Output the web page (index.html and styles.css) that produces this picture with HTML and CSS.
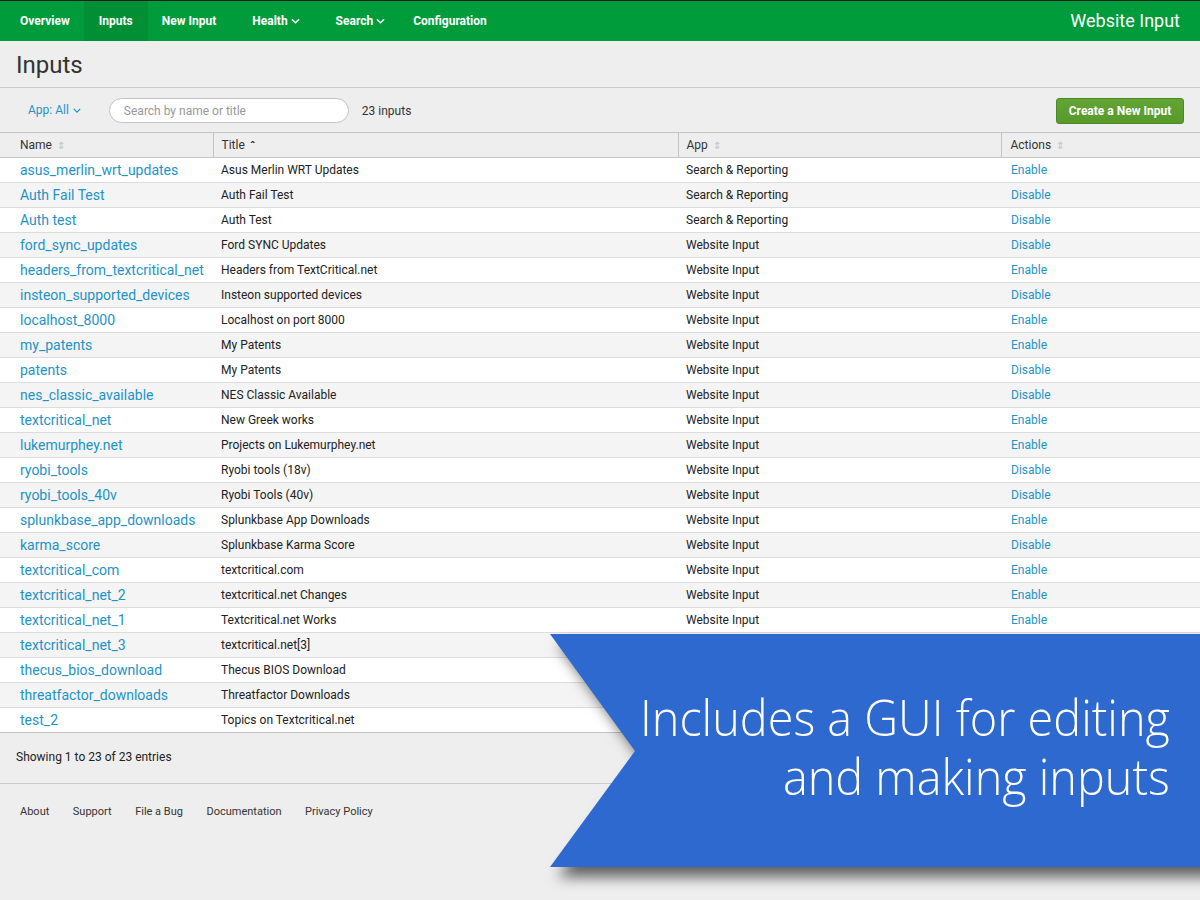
FILE: index.html
```html
<!DOCTYPE html>
<html>
<head>
<meta charset="utf-8">
<link rel="stylesheet" href="styles.css">
</head>
<body>
<nav class="nav">
  <ul class="nav-items">
    <li class="nav-item">Overview</li>
    <li class="nav-item active">Inputs</li>
    <li class="nav-item">New Input</li>
    <li class="nav-item drop">Health <svg class="chev" viewBox="0 0 10 6"><path d="M1 1l4 4 4-4" /></svg></li>
    <li class="nav-item drop">Search <svg class="chev" viewBox="0 0 10 6"><path d="M1 1l4 4 4-4" /></svg></li>
    <li class="nav-item">Configuration</li>
  </ul>
  <div class="app-name">Website Input</div>
</nav>

<header class="page-header">
  <h1 class="page-title">Inputs</h1>
</header>

<div class="toolbar">
  <div class="app-filter">App: All <svg class="chev" viewBox="0 0 10 6"><path d="M1 1l4 4 4-4" /></svg></div>
  <div class="search-box">Search by name or title</div>
  <div class="count">23 inputs</div>
  <div class="spacer"></div>
  <button class="btn-create">Create a New Input</button>
</div>

<table class="inputs-table">
  <thead>
    <tr>
      <th class="col-name">Name <span class="sort">&#8661;</span></th>
      <th class="col-title">Title <span class="sort-active">&#710;</span></th>
      <th class="col-app">App <span class="sort">&#8661;</span></th>
      <th class="col-actions">Actions <span class="sort">&#8661;</span></th>
    </tr>
  </thead>
  <tbody>
    <tr><td><a>asus_merlin_wrt_updates</a></td><td>Asus Merlin WRT Updates</td><td>Search &amp; Reporting</td><td><a class="act">Enable</a></td></tr>
    <tr><td><a>Auth Fail Test</a></td><td>Auth Fail Test</td><td>Search &amp; Reporting</td><td><a class="act">Disable</a></td></tr>
    <tr><td><a>Auth test</a></td><td>Auth Test</td><td>Search &amp; Reporting</td><td><a class="act">Disable</a></td></tr>
    <tr><td><a>ford_sync_updates</a></td><td>Ford SYNC Updates</td><td>Website Input</td><td><a class="act">Disable</a></td></tr>
    <tr><td><a>headers_from_textcritical_net</a></td><td>Headers from TextCritical.net</td><td>Website Input</td><td><a class="act">Enable</a></td></tr>
    <tr><td><a>insteon_supported_devices</a></td><td>Insteon supported devices</td><td>Website Input</td><td><a class="act">Disable</a></td></tr>
    <tr><td><a>localhost_8000</a></td><td>Localhost on port 8000</td><td>Website Input</td><td><a class="act">Enable</a></td></tr>
    <tr><td><a>my_patents</a></td><td>My Patents</td><td>Website Input</td><td><a class="act">Enable</a></td></tr>
    <tr><td><a>patents</a></td><td>My Patents</td><td>Website Input</td><td><a class="act">Disable</a></td></tr>
    <tr><td><a>nes_classic_available</a></td><td>NES Classic Available</td><td>Website Input</td><td><a class="act">Disable</a></td></tr>
    <tr><td><a>textcritical_net</a></td><td>New Greek works</td><td>Website Input</td><td><a class="act">Enable</a></td></tr>
    <tr><td><a>lukemurphey.net</a></td><td>Projects on Lukemurphey.net</td><td>Website Input</td><td><a class="act">Enable</a></td></tr>
    <tr><td><a>ryobi_tools</a></td><td>Ryobi tools (18v)</td><td>Website Input</td><td><a class="act">Disable</a></td></tr>
    <tr><td><a>ryobi_tools_40v</a></td><td>Ryobi Tools (40v)</td><td>Website Input</td><td><a class="act">Disable</a></td></tr>
    <tr><td><a>splunkbase_app_downloads</a></td><td>Splunkbase App Downloads</td><td>Website Input</td><td><a class="act">Enable</a></td></tr>
    <tr><td><a>karma_score</a></td><td>Splunkbase Karma Score</td><td>Website Input</td><td><a class="act">Disable</a></td></tr>
    <tr><td><a>textcritical_com</a></td><td>textcritical.com</td><td>Website Input</td><td><a class="act">Enable</a></td></tr>
    <tr><td><a>textcritical_net_2</a></td><td>textcritical.net Changes</td><td>Website Input</td><td><a class="act">Enable</a></td></tr>
    <tr><td><a>textcritical_net_1</a></td><td>Textcritical.net Works</td><td>Website Input</td><td><a class="act">Enable</a></td></tr>
    <tr><td><a>textcritical_net_3</a></td><td>textcritical.net[3]</td><td></td><td></td></tr>
    <tr><td><a>thecus_bios_download</a></td><td>Thecus BIOS Download</td><td></td><td></td></tr>
    <tr><td><a>threatfactor_downloads</a></td><td>Threatfactor Downloads</td><td></td><td></td></tr>
    <tr><td><a>test_2</a></td><td>Topics on Textcritical.net</td><td></td><td></td></tr>
  </tbody>
</table>

<div class="showing">Showing 1 to 23 of 23 entries</div>

<footer class="footer">
  <a>About</a>
  <a>Support</a>
  <a>File a Bug</a>
  <a>Documentation</a>
  <a>Privacy Policy</a>
</footer>

<div class="banner-wrap">
  <div class="banner">
    <div class="banner-text">Includes a GUI for editing<br>and making inputs</div>
  </div>
</div>
</body>
</html>
```

FILE: styles.css
```css
* { box-sizing: border-box; }
html, body { margin: 0; padding: 0; }
body {
  background: #eeeeee;
  font-family: Roboto, "Liberation Sans", sans-serif;
  color: #333;
  width: 1200px;
  height: 900px;
  overflow: hidden;
  position: relative;
}

.nav {
  height: 41px;
  background: #009b3a;
  border-top: 1px solid #1d1d1d;
  display: flex;
  align-items: stretch;
  padding-left: 6px;
  padding-right: 20px;
}
.nav-items {
  list-style: none;
  margin: 0;
  padding: 0;
  display: flex;
  flex: 1;
}
.nav-item {
  display: flex;
  align-items: center;
  gap: 3px;
  padding: 0 14px 1px 14px;
  color: #fff;
  font-size: 12px;
  font-weight: 700;
}
.nav-item.active { padding: 0 15px 1px 15px; background: #008f35; }
.nav-item.drop { padding: 0 14px 1px 22px; }
.nav-item .chev {
  width: 9px;
  height: 6px;
  fill: none;
  stroke: #fff;
  stroke-width: 1.6;
}
.app-name {
  color: #fff;
  font-size: 18px;
  display: flex;
  align-items: center;
  padding-bottom: 2px;
}

.page-header {
  height: 47px;
  border-bottom: 1px solid #cccccc;
  padding: 10px 16px 0;
}
.page-title {
  margin: 0;
  font-size: 24px;
  font-weight: 400;
  color: #333;
  line-height: 28px;
}

.toolbar {
  height: 44px;
  display: flex;
  align-items: center;
  padding: 0 16px 0 28px;
}
.app-filter {
  color: #1e93c6;
  font-size: 12px;
  display: flex;
  align-items: center;
  gap: 4px;
  margin-right: 28px;
}
.app-filter .chev {
  width: 8px;
  height: 5px;
  fill: none;
  stroke: #1e93c6;
  stroke-width: 1.6;
}
.search-box {
  width: 240px;
  height: 25px;
  background: #fff;
  border: 1px solid #c3c3c3;
  border-radius: 13px;
  font-size: 12px;
  color: #999;
  padding: 5px 14px;
  margin-right: 13px;
}
.count { font-size: 12px; color: #333; padding-top: 1px; }
.spacer { flex: 1; }
.btn-create {
  font-family: Roboto, "Liberation Sans", sans-serif;
  height: 26px;
  width: 128px;
  background: linear-gradient(#62a535, #579a2b);
  border: 1px solid #4a8a22;
  border-radius: 3px;
  color: #fff;
  font-size: 12px;
  font-weight: 700;
  padding: 0;
  margin-top: 2px;
}

.inputs-table {
  width: 1200px;
  border-collapse: collapse;
  table-layout: fixed;
}
.inputs-table th {
  height: 25px;
  text-align: left;
  font-size: 12px;
  font-weight: 400;
  color: #333;
  border-top: 1px solid #c3c3c3;
  border-bottom: 1px solid #c3c3c3;
  border-left: 1px solid #c3c3c3;
  padding: 0 8px;
  background: #eeeeee;
}
.inputs-table th:first-child { border-left: none; padding-left: 20px; }
.col-name { width: 213px; }
.col-title { width: 465px; }
.col-app { width: 323px; }
.col-actions { width: 199px; }
.inputs-table th.col-actions { padding-left: 9px; }
.sort { color: #c0c0c0; font-size: 10px; margin-left: 2px; }
.sort-active { color: #222; font-size: 12px; font-weight: 700; margin-left: 2px; position: relative; top: 2px; }

.inputs-table td {
  height: 25px;
  font-size: 12px;
  color: #222;
  border-bottom: 1px solid #dcdcdc;
  padding: 0 8px;
  white-space: nowrap;
  overflow: hidden;
}
.inputs-table td:first-child { padding-left: 20px; }
.inputs-table td:last-child { padding-left: 10px; }
.inputs-table tbody tr:nth-child(odd) td { background: #ffffff; }
.inputs-table tbody tr:nth-child(even) td { background: #f4f4f4; }
.inputs-table tbody tr:last-child td { border-bottom: 1px solid #c3c3c3; }
.inputs-table td a { color: #1e93c6; font-size: 14px; }
.inputs-table td a.act { font-size: 12px; }

.showing {
  height: 51px;
  border-bottom: 1px solid #cccccc;
  font-size: 12px;
  padding: 17px 16px 0;
  color: #222;
}

.footer {
  display: flex;
  gap: 23.5px;
  padding: 21px 20px 0;
  font-size: 11px;
}
.footer a { color: #333; }

.banner-wrap {
  position: absolute;
  left: 550px;
  top: 634px;
  width: 660px;
  height: 233px;
  filter: drop-shadow(8px 10px 7px rgba(0,0,0,0.6));
}
.banner {
  width: 100%;
  height: 100%;
  background: #2d69cf;
  clip-path: polygon(0 0, 100% 0, 100% 100%, 0 100%, 85px 117px);
}
.banner-text {
  position: absolute;
  right: 40px;
  top: 54px;
  text-align: right;
  color: #fff;
  font-family: "Open Sans", sans-serif;
  font-weight: 300;
  font-size: 49px;
  line-height: 59px;
  transform: scaleX(0.955);
  transform-origin: right top;
  white-space: nowrap;
}
```
